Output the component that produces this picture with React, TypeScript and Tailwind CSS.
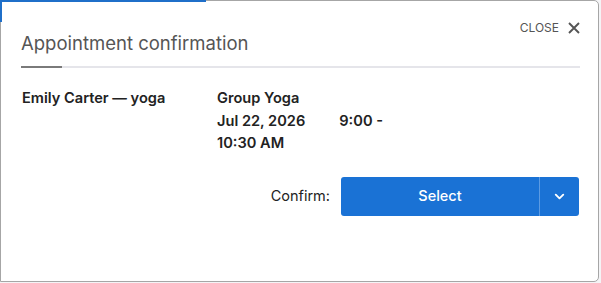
import { ChevronDown } from 'lucide-react';

export default function App() {
  return (
    <div className="h-[283px] w-[601px] bg-[#f4f4f6] font-['Inter',sans-serif]">
      <div className="relative h-[282px] w-[599px] rounded-r-[5px] border border-[#a6a6a6] bg-white">
        {/* focus marks on the top-left edge */}
        <div className="absolute -top-px -left-px h-[2px] w-[206px] bg-[#1f6fc9]" />
        <div className="absolute -top-px -left-px h-[22px] w-[2px] bg-[#1f6fc9]" />

        <div className="pl-[20px] pr-[18px]">
          {/* Header */}
          <div className="flex items-start justify-between pt-[18px]">
            <h2 className="mt-[12px] text-[18.5px] leading-[24px] text-[#555]">
              Appointment confirmation
            </h2>
            <button className="flex items-center gap-[9px] text-[12px] leading-[18px] text-[#555]">
              CLOSE
              <svg width="12" height="12" viewBox="0 0 12 12">
                <path d="M1 1 L11 11 M11 1 L1 11" stroke="#555" strokeWidth="1.9" fill="none" />
              </svg>
            </button>
          </div>

          {/* Tab underline */}
          <div className="mt-[11px] flex h-[2px]">
            <div className="w-[41px] bg-[#7a7a7a]" />
            <div className="flex-1 bg-[#e5e5ea]" />
          </div>

          {/* Details */}
          <div className="mt-[19px] flex text-[14.6px] font-semibold leading-[22.5px] text-[#222]">
            <div className="w-[196px] pl-px">Emily Carter — yoga</div>
            <div className="flex w-[200px] flex-wrap gap-x-[34px]">
              <div className="w-full">Group Yoga</div>
              <div>Jul 22, 2026</div>
              <div>9:00 -</div>
              <div>10:30 AM</div>
            </div>
          </div>

          {/* Confirm */}
          <div className="mt-[22px] flex items-center justify-end gap-[11px]">
            <span className="text-[14.5px] text-[#222]">Confirm:</span>
            <div className="mr-[1px] flex h-[39px] w-[238px] overflow-hidden rounded-[3px] bg-[#1a72d5] text-white">
              <button className="flex-1 text-[14.5px] font-medium">Select</button>
              <button className="flex w-[40px] items-center justify-center border-l border-[#5c9be3]">
                <ChevronDown size={15} strokeWidth={3} />
              </button>
            </div>
          </div>
        </div>
      </div>
    </div>
  );
}
